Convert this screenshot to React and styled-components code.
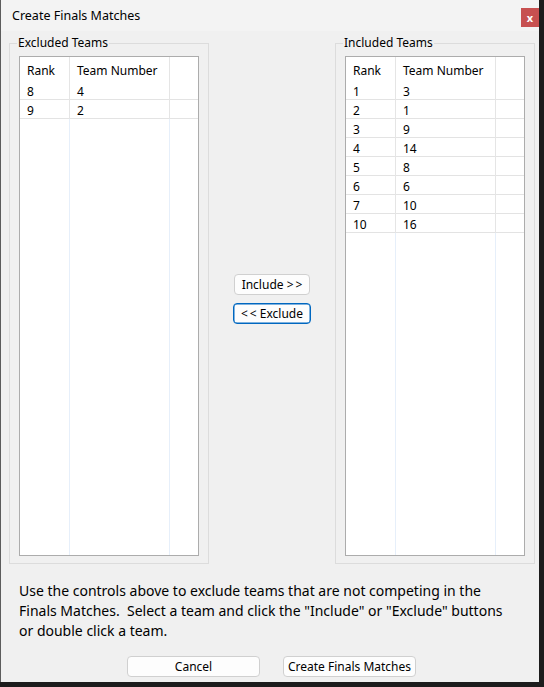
import React from 'react';
import styled, { createGlobalStyle } from 'styled-components';

const excluded = [
   { rank: 8, team: 4 },
   { rank: 9, team: 2 },
];

const included = [
   { rank: 1, team: 3 },
   { rank: 2, team: 1 },
   { rank: 3, team: 9 },
   { rank: 4, team: 14 },
   { rank: 5, team: 8 },
   { rank: 6, team: 6 },
   { rank: 7, team: 10 },
   { rank: 10, team: 16 },
];

const TeamList = ({ title, teams }) => (
   <Group>
      <Legend>{title}</Legend>
      <ListView>
         <HeaderRow>
            <Cell>Rank</Cell>
            <Cell>Team Number</Cell>
            <Cell />
         </HeaderRow>
         {teams.map((t) => (
            <Row key={t.rank}>
               <Cell>{t.rank}</Cell>
               <Cell>{t.team}</Cell>
               <Cell />
            </Row>
         ))}
         {/* empty space under the rows keeps the column lines */}
         <Filler>
            <Cell />
            <Cell />
            <Cell />
         </Filler>
      </ListView>
   </Group>
);

const App = () => (
   <>
      <GlobalStyle />
      <Window>
         <TitleBar>
            <Title>Create Finals Matches</Title>
            <CloseButton>x</CloseButton>
         </TitleBar>
         <Body>
            <Columns>
               <TeamList title="Excluded Teams" teams={excluded} />
               <Middle>
                  <Button $width={76}>Include &gt;&thinsp;&gt;</Button>
                  <Button $width={78} $focused>
                     &lt;&thinsp;&lt; Exclude
                  </Button>
               </Middle>
               <TeamList title="Included Teams" teams={included} />
            </Columns>
            <Help>
               Use the controls above to exclude teams that are not competing in the
               <br />
               Finals Matches.&nbsp; Select a team and click the "Include" or "Exclude" buttons
               <br />
               or double click a team.
            </Help>
            <Footer>
               <Button $width={133}>Cancel</Button>
               <Button $width={133}>Create Finals Matches</Button>
            </Footer>
         </Body>
      </Window>
   </>
);

export default App;

const GlobalStyle = createGlobalStyle`
   body {
      margin: 0;
      background: #1c1c1c;
      font-family: "Noto Sans", "Open Sans", sans-serif;
   }
`;

const Window = styled.div`
   width: 538px;
   height: 682px;
   background: #f0f0f0;
   border-left: 1px solid #5c5c5c;
   display: flex;
   flex-direction: column;
   color: #000;
`;

const TitleBar = styled.div`
   height: 31px;
   display: flex;
   align-items: flex-start;
   justify-content: space-between;
   background: #f3f3f3;
   padding-left: 11px;
`;

const Title = styled.div`
   font-size: 12.5px;
   line-height: 32px;
`;

const CloseButton = styled.div`
   width: 18px;
   height: 19px;
   margin-top: 8px;
   background: #c75050;
   color: #fff;
   font-size: 11px;
   font-weight: bold;
   display: flex;
   align-items: center;
   justify-content: center;
   line-height: 1;
`;

const Body = styled.div`
   flex: 1;
   display: flex;
   flex-direction: column;
   padding: 4px 0 0 8px;
`;

const Columns = styled.div`
   display: flex;
   height: 529px;
`;

const Group = styled.fieldset`
   flex: none;
   width: 200px;
   box-sizing: border-box;
   margin: 0;
   padding: 5px 9px 7px 9px;
   border: 1px solid #dcdcdc;
   min-width: 0;
   display: flex;
   flex-direction: column;
`;

const Legend = styled.legend`
   font-size: 12px;
   padding: 0 1px;
   margin-left: -2px;
   line-height: 16px;
`;

const ListView = styled.div`
   flex: 1;
   border: 1px solid #acacac;
   background: #fff;
   display: flex;
   flex-direction: column;
   font-size: 12px;
`;

const Grid = styled.div`
   display: grid;
   grid-template-columns: 50px 100px 1fr;
`;

const HeaderRow = styled(Grid)`
   height: 24px;
   align-items: center;

   & > div {
      height: 100%;
      display: flex;
      align-items: center;
      padding-top: 2px;
      box-sizing: border-box;
      border-right-color: #e5e5e5;
   }
`;

const Row = styled(Grid)`
   height: 18px;
   border-bottom: 1px solid #e3e3e3;

   & > div {
      line-height: 17px;
      padding-top: 2px;
      border-right-color: #e5e5e5;
   }
`;

const Filler = styled(Grid)`
   flex: 1;

   & > div {
      border-right-color: #e6effa;
   }
`;

const Cell = styled.div`
   padding-left: 7px;
   border-right: 1px solid #e5e5e5;
   white-space: nowrap;

   &:last-child {
      border-right: none;
   }
`;

const Middle = styled.div`
   flex: none;
   width: 126px;
   display: flex;
   flex-direction: column;
   align-items: center;
   justify-content: center;
   gap: 8px;
   padding-bottom: 2px;
`;

const Button = styled.div`
   width: ${(p) => p.$width}px;
   height: 21px;
   box-sizing: border-box;
   border: 1px solid ${(p) => (p.$focused ? '#0067c0' : '#d0d0d0')};
   box-shadow: ${(p) => (p.$focused ? 'inset 0 0 0 0.5px #0067c0' : 'none')};
   border-radius: 4px;
   background: #fdfdfd;
   font-size: 12px;
   display: flex;
   align-items: center;
   justify-content: center;
   white-space: nowrap;
`;

const Help = styled.p`
   margin: 17px 0 0 10px;
   font-size: 14px;
   line-height: 20px;
   white-space: nowrap;
`;

const Footer = styled.div`
   display: flex;
   justify-content: center;
   gap: 23px;
   margin-top: 15px;
   padding-right: 5px;
`;
